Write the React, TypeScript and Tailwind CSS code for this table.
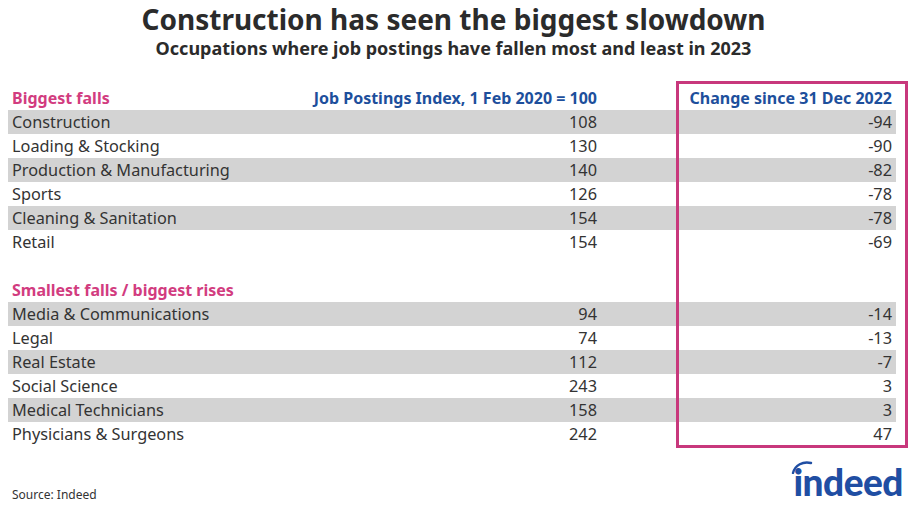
import React from 'react';

type Row = { name: string; index: number; change: number };

const biggestFalls: Row[] = [
  { name: 'Construction', index: 108, change: -94 },
  { name: 'Loading & Stocking', index: 130, change: -90 },
  { name: 'Production & Manufacturing', index: 140, change: -82 },
  { name: 'Sports', index: 126, change: -78 },
  { name: 'Cleaning & Sanitation', index: 154, change: -78 },
  { name: 'Retail', index: 154, change: -69 },
];

const smallestFalls: Row[] = [
  { name: 'Media & Communications', index: 94, change: -14 },
  { name: 'Legal', index: 74, change: -13 },
  { name: 'Real Estate', index: 112, change: -7 },
  { name: 'Social Science', index: 243, change: 3 },
  { name: 'Medical Technicians', index: 158, change: 3 },
  { name: 'Physicians & Surgeons', index: 242, change: 47 },
];

function DataRow({ row, shaded }: { row: Row; shaded: boolean }) {
  return (
    <div className={`flex h-6 items-center text-[16.3px] text-[#333333] ${shaded ? 'bg-[#d3d3d3]' : ''}`}>
      <div className="flex w-[591px] justify-between pl-1 pr-[2px]">
        <span>{row.name}</span>
        <span>{row.index}</span>
      </div>
      <div className="flex-1 pr-1 text-right">{row.change}</div>
    </div>
  );
}

function SectionHeader({ label, showColumns }: { label: string; showColumns?: boolean }) {
  return (
    <div className="flex h-6 items-center text-[16px] font-bold">
      <div className="flex w-[591px] justify-between pl-1 pr-[2px]">
        <span className="text-[#d23c7f]">{label}</span>
        {showColumns && <span className="text-[#1d4f9c]">Job Postings Index, 1 Feb 2020 = 100</span>}
      </div>
      {showColumns && <div className="flex-1 pr-1 text-right text-[#1d4f9c]">Change since 31 Dec 2022</div>}
    </div>
  );
}

function IndeedLogo() {
  return (
    <div className="relative flex items-end">
      <svg className="absolute left-[-2px] top-[-3px]" width="22" height="14" viewBox="0 0 22 14">
        <path d="M2 13 C4 5 12 1 20 3" fill="none" stroke="#1f4ea3" strokeWidth="2.4" strokeLinecap="round" />
      </svg>
      <span className="text-[37px] font-black leading-none tracking-[-0.5px] text-[#1f4ea3] [font-family:Lato,'Noto_Sans',sans-serif]">
        indeed
      </span>
    </div>
  );
}

export default function App() {
  return (
    <div className="relative h-[507px] w-[917px] overflow-hidden bg-white [font-family:'Noto_Sans','Open_Sans',sans-serif]">
      {/* Titles */}
      <div className="pr-[10px] pt-[1px] text-center">
        <h1 className="text-[28px] font-bold leading-[36px] text-[#2b2b2b]">
          Construction has seen the biggest slowdown
        </h1>
        <h2 className="mt-[-1px] text-[18px] font-bold leading-[24px] text-[#2b2b2b]">
          Occupations where job postings have fallen most and least in 2023
        </h2>
      </div>

      {/* Table */}
      <div className="mx-2 mt-[26px] w-[888px]">
        <SectionHeader label="Biggest falls" showColumns />
        {biggestFalls.map((r, i) => (
          <DataRow key={r.name} row={r} shaded={i % 2 === 0} />
        ))}
        <div className="h-6" />
        <SectionHeader label="Smallest falls / biggest rises" />
        {smallestFalls.map((r, i) => (
          <DataRow key={r.name} row={r} shaded={i % 2 === 0} />
        ))}
      </div>

      {/* Highlight box over the change column */}
      <div className="pointer-events-none absolute left-[676px] top-[81px] h-[367px] w-[232px] border-[3px] border-[#c8387c]" />

      {/* Footer */}
      <div className="mt-[35px] px-3">
        <span className="text-[12px] text-[#333333]">Source: Indeed</span>
      </div>
      <div className="absolute right-[14px] top-[463px]">
        <IndeedLogo />
      </div>
    </div>
  );
}
